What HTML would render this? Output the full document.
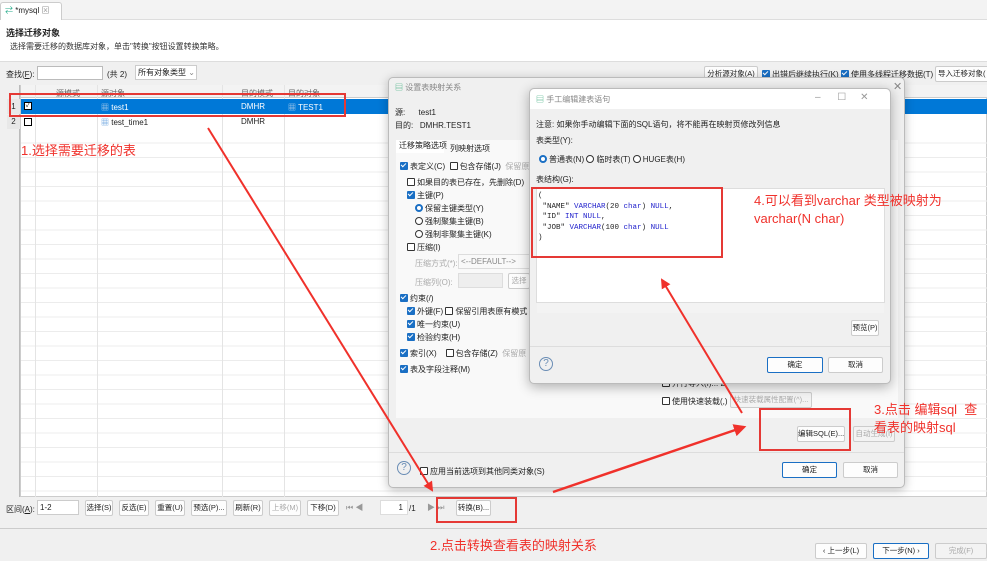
<!DOCTYPE html>
<html><head><meta charset="utf-8">
<style>
*{margin:0;padding:0;box-sizing:border-box}
body{width:987px;height:561px;overflow:hidden;background:#f0f0f0;font-family:"Liberation Sans","Noto Sans CJK SC",sans-serif;font-size:8px;color:#222;position:relative}
.a{position:absolute;white-space:nowrap}
.btn{position:absolute;white-space:nowrap;overflow:hidden;background:#fdfdfd;border:1px solid #ccc;border-radius:2px;text-align:center;font-size:7.5px;line-height:14px;height:16px;padding:0}
.cb{display:inline-block;width:8px;height:8px;border:1px solid #333;border-radius:1px;vertical-align:-1px;margin-right:2px;background:#fff}
.cbk{display:inline-block;width:8px;height:8px;background:#1a6fc4;border-radius:1px;vertical-align:-1px;margin-right:2px;position:relative}
.cbk:after{content:"";position:absolute;left:2px;top:0px;width:2px;height:4px;border:solid #fff;border-width:0 1.2px 1.2px 0;transform:rotate(45deg)}
.rd{display:inline-block;width:8px;height:8px;border:1px solid #333;border-radius:50%;vertical-align:-1px;margin-right:2px;background:#fff}
.rdk{display:inline-block;width:8px;height:8px;border:2.5px solid #1a6fc4;border-radius:50%;vertical-align:-1px;margin-right:2px;background:#fff}
.red{color:#f0312b;font-size:13px}
.gl{position:absolute;background:#e4e4e4}
.grid{position:absolute;left:7px;top:129px;width:980px;height:367px;background:repeating-linear-gradient(to bottom,transparent 0,transparent 13.5px,#ececec 13.5px,#ececec 14.5px)}
</style></head><body>
<div class="a" style="left:0;top:0;width:987px;height:20px;background:#f3f3f3;border-bottom:1px solid #ddd"></div>
<div class="a" style="left:0;top:2px;width:62px;height:18px;background:#fff;border:1px solid #ccc;border-bottom:none;border-radius:3px 3px 0 0;font-size:8px;line-height:16px;padding-left:4px"><span style="color:#2a8;">⇄</span> *mysql <span style="color:#999">⊠</span></div>
<div class="a" style="left:0;top:20px;width:987px;height:42px;background:#fff;border-bottom:1px solid #ddd"></div>
<div class="a" style="left:6px;top:26px;font-size:9px;font-weight:bold">选择迁移对象</div>
<div class="a" style="left:10px;top:41px;font-size:8px;color:#333">选择需要迁移的数据库对象，单击"转换"按钮设置转换策略。</div>
<div class="a" style="left:6px;top:69px">查找(<u>F</u>):</div>
<div class="a" style="left:37px;top:66px;width:66px;height:14px;background:#fff;border:1px solid #bbb"></div>
<div class="a" style="left:107px;top:69px">(共 2)</div>
<div class="a" style="left:135px;top:65px;width:62px;height:15px;background:#fff;border:1px solid #ccc;line-height:13px;padding-left:2px">所有对象类型 <span style="color:#888">⌄</span></div>
<div class="btn" style="left:704px;top:66px;width:54px">分析源对象(A)</div>
<div class="a" style="left:762px;top:69px"><span class="cbk"></span>出错后继续执行(K)</div>
<div class="a" style="left:841px;top:69px"><span class="cbk"></span>使用多线程迁移数据(T)</div>
<div class="btn" style="left:935px;top:66px;width:60px;text-align:left;padding-left:2px">导入迁移对象(</div>
<div class="a" style="left:7px;top:85px;width:980px;height:412px;background:#fff;border:1px solid #ccc"></div>
<div class="grid"></div>
<div class="a" style="left:7px;top:85px;width:980px;height:13px;background:#f3f3f3;border-bottom:1px solid #ccc"></div>
<div class="a" style="left:7px;top:85px;width:13px;height:412px;background:#f0f0f0;border-right:1px solid #bbb"></div>
<div class="gl" style="left:20px;top:85px;width:1px;height:412px;background:#ccc"></div>
<div class="gl" style="left:35px;top:85px;width:1px;height:412px"></div>
<div class="gl" style="left:97px;top:85px;width:1px;height:412px"></div>
<div class="gl" style="left:222px;top:85px;width:1px;height:412px"></div>
<div class="gl" style="left:284px;top:85px;width:1px;height:412px"></div>
<div class="a" style="left:56px;top:88px;color:#666">源模式</div>
<div class="a" style="left:101px;top:88px;color:#666">源对象</div>
<div class="a" style="left:241px;top:88px;color:#666">目的模式</div>
<div class="a" style="left:288px;top:88px;color:#666">目的对象</div>
<div class="a" style="left:21px;top:99px;width:966px;height:15px;background:#0078d7"></div>
<div class="a" style="left:7px;top:99px;width:13px;height:15px;background:#e8e8e8;text-align:center;line-height:15px">1</div>
<div class="a" style="left:7px;top:115px;width:13px;height:14px;background:#e8e8e8;text-align:center;line-height:14px">2</div>
<div class="a" style="left:24px;top:102px;width:8px;height:8px;background:#fff;border:1px solid #000;font-size:7px;line-height:6px;text-align:center">✓</div>
<div class="a" style="left:24px;top:118px;width:8px;height:8px;background:#fff;border:1px solid #000"></div>
<div class="a" style="left:101px;top:102px;color:#fff"><span style="color:#cde">▦</span> test1</div>
<div class="a" style="left:241px;top:102px;color:#fff">DMHR</div>
<div class="a" style="left:288px;top:102px;color:#fff"><span style="color:#cde">▦</span> TEST1</div>
<div class="a" style="left:101px;top:117px"><span style="color:#4a90d9">▦</span> test_time1</div>
<div class="a" style="left:241px;top:117px">DMHR</div>
<div class="a" style="left:9px;top:93px;width:337px;height:24px;border:2px solid #e53935"></div>
<div class="a red" style="left:21px;top:140px">1.选择需要迁移的表</div>

<div class="a" style="left:6px;top:504px">区间(<u>A</u>):</div>
<div class="a" style="left:37px;top:500px;width:42px;height:15px;background:#fff;border:1px solid #ccc;line-height:13px;padding-left:2px">1-2</div>
<div class="btn" style="left:85px;top:500px;width:28px">选择(S)</div>
<div class="btn" style="left:119px;top:500px;width:30px">反选(E)</div>
<div class="btn" style="left:155px;top:500px;width:30px">重置(U)</div>
<div class="btn" style="left:191px;top:500px;width:36px">预选(P)...</div>
<div class="btn" style="left:233px;top:500px;width:30px">刷新(R)</div>
<div class="btn" style="left:269px;top:500px;width:32px;color:#aaa">上移(M)</div>
<div class="btn" style="left:307px;top:500px;width:32px">下移(D)</div>
<div class="a" style="left:346px;top:502px;color:#999">⏮ ◀</div>
<div class="a" style="left:380px;top:500px;width:28px;height:15px;background:#fff;border:1px solid #ddd;text-align:right;padding-right:4px;line-height:13px">1</div>
<div class="a" style="left:409px;top:504px">/1</div>
<div class="a" style="left:427px;top:502px;color:#999">▶ ⏭</div>
<div class="btn" style="left:456px;top:500px;width:35px">转换(B)...</div>
<div class="a" style="left:436px;top:497px;width:81px;height:26px;border:2px solid #e53935"></div>
<div class="a" style="left:0;top:528px;width:987px;height:1px;background:#ccc"></div>
<div class="a red" style="left:430px;top:535px">2.点击转换查看表的映射关系</div>
<div class="btn" style="left:815px;top:543px;width:52px;height:16px">‹ 上一步(L)</div>
<div class="btn" style="left:873px;top:543px;width:56px;height:16px;border-color:#1a6fc4">下一步(N) ›</div>
<div class="btn" style="left:935px;top:543px;width:52px;height:16px;color:#aaa;background:#f3f3f3">完成(F)</div>

<div class="a" style="left:388px;top:77px;width:517px;height:411px;background:#f0f0f0;border:1px solid #bbb;border-radius:5px;box-shadow:0 2px 10px rgba(0,0,0,.25)"></div>
<div class="a" style="left:395px;top:82px;color:#888"><span style="color:#3a7">▤</span> 设置表映射关系</div>
<div class="a" style="left:893px;top:80px;color:#888;font-size:11px">✕</div>
<div class="a" style="left:395px;top:107px">源:&nbsp;&nbsp;&nbsp;&nbsp;&nbsp; test1</div>
<div class="a" style="left:395px;top:120px">目的:&nbsp;&nbsp; DMHR.TEST1</div>
<div class="a" style="left:396px;top:140px;width:502px;height:278px;background:#f9f9f9"></div>
<div class="a" style="left:396px;top:140px;width:48px;height:13px;background:#fff;padding-left:3px">迁移策略选项</div>
<div class="a" style="left:450px;top:143px">列映射选项</div>
<div class="a" style="left:400px;top:161px"><span class="cbk"></span>表定义(C) &nbsp;<span class="cb"></span>包含存储(J) &nbsp;<span style="color:#aaa">保留原</span></div>
<div class="a" style="left:407px;top:177px"><span class="cb"></span>如果目的表已存在，先删除(D)</div>
<div class="a" style="left:407px;top:190px"><span class="cbk"></span>主键(P)</div>
<div class="a" style="left:415px;top:203px"><span class="rdk"></span>保留主键类型(Y)</div>
<div class="a" style="left:415px;top:216px"><span class="rd"></span>强制聚集主键(B)</div>
<div class="a" style="left:415px;top:229px"><span class="rd"></span>强制非聚集主键(K)</div>
<div class="a" style="left:407px;top:242px"><span class="cb"></span>压缩(I)</div>
<div class="a" style="left:415px;top:258px;color:#aaa">压缩方式(*):</div>
<div class="a" style="left:458px;top:254px;width:72px;height:15px;border:1px solid #ddd;color:#888;line-height:13px;padding-left:2px">&lt;--DEFAULT--&gt;</div>
<div class="a" style="left:415px;top:277px;color:#aaa">压缩列(O):</div>
<div class="a" style="left:458px;top:273px;width:45px;height:15px;background:#eee;border:1px solid #ddd"></div>
<div class="btn" style="left:508px;top:273px;width:22px;color:#aaa">选择</div>
<div class="a" style="left:400px;top:293px"><span class="cbk"></span>约束(/)</div>
<div class="a" style="left:407px;top:306px"><span class="cbk"></span>外键(F) <span class="cb"></span>保留引用表原有模式</div>
<div class="a" style="left:407px;top:319px"><span class="cbk"></span>唯一约束(U)</div>
<div class="a" style="left:407px;top:332px"><span class="cbk"></span>检验约束(H)</div>
<div class="a" style="left:400px;top:348px"><span class="cbk"></span>索引(X) &nbsp;&nbsp;&nbsp;<span class="cb"></span>包含存储(Z) &nbsp;<span style="color:#aaa">保留原</span></div>
<div class="a" style="left:400px;top:364px"><span class="cbk"></span>表及字段注释(M)</div>
<div class="a" style="left:662px;top:378px"><span class="cb"></span>并行导入(I)... 2</div>
<div class="a" style="left:662px;top:396px"><span class="cb"></span>使用快速装载(,)</div>
<div class="btn" style="left:730px;top:392px;width:82px;color:#aaa;background:#f3f3f3">快速装载属性配置(^)...</div>
<div class="btn" style="left:797px;top:426px;width:48px">编辑SQL(E)...</div>
<div class="btn" style="left:853px;top:426px;width:42px;color:#aaa;background:#f3f3f3">自动生成(I)</div>
<div class="a" style="left:759px;top:408px;width:92px;height:43px;border:2px solid #e53935"></div>
<div class="a" style="left:389px;top:452px;width:515px;height:1px;background:#ddd"></div>
<div class="a" style="left:397px;top:461px;width:14px;height:14px;border:1px solid #6a8db5;border-radius:50%;color:#6a8db5;font-size:10px;text-align:center;line-height:12px">?</div>
<div class="a" style="left:420px;top:466px"><span class="cb"></span>应用当前选项到其他同类对象(S)</div>
<div class="btn" style="left:782px;top:462px;width:55px;border-color:#1a6fc4">确定</div>
<div class="btn" style="left:843px;top:462px;width:55px">取消</div>
<div class="a red" style="left:874px;top:401px;line-height:18px">3.点击 编辑sql&nbsp; 查<br>看表的映射sql</div>

<div class="a" style="left:529px;top:88px;width:362px;height:296px;background:#f0f0f0;border:1px solid #bbb;border-radius:5px;box-shadow:0 3px 12px rgba(0,0,0,.3)"></div>
<div class="a" style="left:530px;top:89px;width:360px;height:20px;background:#fff;border-radius:5px 5px 0 0"></div>
<div class="a" style="left:536px;top:94px;color:#888"><span style="color:#3a7">▤</span> 手工编辑建表语句</div>
<div class="a" style="left:815px;top:92px;color:#999;font-size:10px">–&nbsp;&nbsp;&nbsp;&nbsp;&nbsp;&nbsp;☐&nbsp;&nbsp;&nbsp;&nbsp;&nbsp;✕</div>
<div class="a" style="left:536px;top:119px">注意: 如果你手动编辑下面的SQL语句，将不能再在映射页修改列信息</div>
<div class="a" style="left:536px;top:135px">表类型(Y):</div>
<div class="a" style="left:539px;top:154px"><span class="rdk"></span>普通表(N) <span class="rd"></span>临时表(T) <span class="rd"></span>HUGE表(H)</div>
<div class="a" style="left:536px;top:174px">表结构(G):</div>
<div class="a" style="left:536px;top:188px;width:349px;height:115px;background:#fff;border:1px solid #ddd"></div>
<div class="a" style="left:537px;top:303px;width:347px;height:10px;background:#f3f3f3"></div>
<div class="a" style="left:538px;top:191px;font-family:'Liberation Mono',monospace;font-size:7.5px;line-height:10.5px;color:#222">(<br>&nbsp;"NAME" <span style="color:#22c">VARCHAR</span>(20 <span style="color:#22c">char</span>) <span style="color:#22c">NULL</span>,<br>&nbsp;"ID" <span style="color:#22c">INT NULL</span>,<br>&nbsp;"JOB" <span style="color:#22c">VARCHAR</span>(100 <span style="color:#22c">char</span>) <span style="color:#22c">NULL</span><br>)</div>
<div class="a" style="left:531px;top:187px;width:192px;height:71px;border:2px solid #e53935"></div>
<div class="a red" style="left:754px;top:192px;line-height:18px">4.可以看到varchar 类型被映射为<br>varchar(N char)</div>
<div class="btn" style="left:851px;top:320px;width:28px">预览(P)</div>
<div class="a" style="left:530px;top:346px;width:360px;height:1px;background:#ddd"></div>
<div class="a" style="left:539px;top:357px;width:14px;height:14px;border:1px solid #6a8db5;border-radius:50%;color:#6a8db5;font-size:10px;text-align:center;line-height:12px">?</div>
<div class="btn" style="left:767px;top:357px;width:56px;border-color:#1a6fc4">确定</div>
<div class="btn" style="left:828px;top:357px;width:55px">取消</div>

<svg class="a" style="left:0;top:0" width="987" height="561">
<defs><marker id="h" markerWidth="5" markerHeight="5" refX="4" refY="2.5" orient="auto"><path d="M0,0 L5,2.5 L0,5 z" fill="#f0312b"/></marker></defs>
<g stroke="#f0312b" fill="none" stroke-width="2">
<line x1="208" y1="128" x2="432" y2="490" marker-end="url(#h)"/>
<line x1="553" y1="492" x2="744" y2="427" marker-end="url(#h)" stroke-width="2.5"/>
<line x1="742" y1="413" x2="662" y2="280" marker-end="url(#h)" stroke-width="2"/>
</g>
</svg>
</body></html>
